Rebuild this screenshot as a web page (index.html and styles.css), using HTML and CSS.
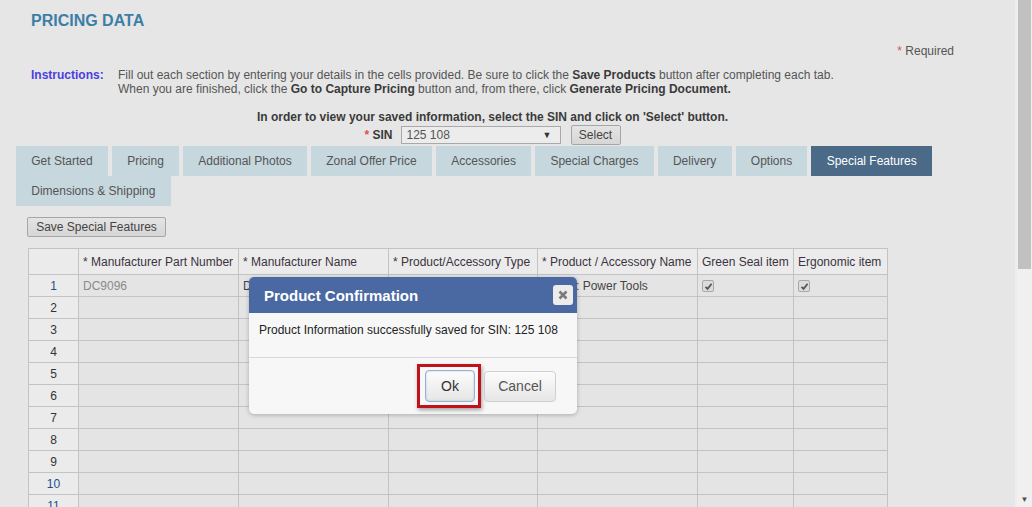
FILE: index.html
```html
<!DOCTYPE html>
<html>
<head>
<meta charset="utf-8">
<link rel="stylesheet" href="styles.css">
</head>
<body>
<div class="screen">
  <div class="page">
    <h1 class="title">PRICING DATA</h1>
    <div class="required"><span class="star">*</span> Required</div>
    <div class="instructions">
      <div class="ins-label">Instructions:</div>
      <div class="ins-text">
        Fill out each section by entering your details in the cells provided. Be sure to click the <b>Save Products</b> button after completing each tab.<br>
        When you are finished, click the <b>Go to Capture Pricing</b> button and, from there, click <b>Generate Pricing Document.</b>
      </div>
    </div>
    <div class="center">
      <div class="view-note">In order to view your saved information, select the SIN and click on 'Select' button.</div>
      <div class="sin-row">
        <span class="sin-label"><span class="star">*</span> SIN</span>
        <div class="select"><span>125 108</span><span class="arrow">&#9660;</span></div>
        <button class="btn select-btn">Select</button>
      </div>
    </div>
    <div class="tabs">
      <div class="tab">Get Started</div>
      <div class="tab">Pricing</div>
      <div class="tab">Additional Photos</div>
      <div class="tab">Zonal Offer Price</div>
      <div class="tab">Accessories</div>
      <div class="tab">Special Charges</div>
      <div class="tab">Delivery</div>
      <div class="tab">Options</div>
      <div class="tab active">Special Features</div>
      <div class="tab">Dimensions &amp; Shipping</div>
    </div>
    <div class="toolbar">
      <button class="btn save-btn">Save Special Features</button>
    </div>
    <table class="grid">
      <colgroup>
        <col style="width:50px"><col style="width:160px"><col style="width:150px"><col style="width:149px"><col style="width:160px"><col style="width:96px"><col style="width:94px">
      </colgroup>
      <thead>
        <tr>
          <th></th>
          <th>* Manufacturer Part Number</th>
          <th>* Manufacturer Name</th>
          <th>* Product/Accessory Type</th>
          <th>* Product / Accessory Name</th>
          <th>Green Seal item</th>
          <th>Ergonomic item</th>
        </tr>
      </thead>
      <tbody>
        <tr>
          <td class="num blue">1</td>
          <td class="muted">DC9096</td>
          <td>DeWalt</td>
          <td></td>
          <td>Cases: Power Tools</td>
          <td><span class="check"><svg viewBox="0 0 9 9" width="9" height="9"><path d="M1.5 4.8 L3.6 6.8 L7.6 1.8" fill="none" stroke="#555" stroke-width="1.8"/></svg></span></td>
          <td><span class="check"><svg viewBox="0 0 9 9" width="9" height="9"><path d="M1.5 4.8 L3.6 6.8 L7.6 1.8" fill="none" stroke="#555" stroke-width="1.8"/></svg></span></td>
        </tr>
        <tr><td class="num">2</td><td></td><td></td><td></td><td></td><td></td><td></td></tr>
        <tr><td class="num">3</td><td></td><td></td><td></td><td></td><td></td><td></td></tr>
        <tr><td class="num">4</td><td></td><td></td><td></td><td></td><td></td><td></td></tr>
        <tr><td class="num">5</td><td></td><td></td><td></td><td></td><td></td><td></td></tr>
        <tr><td class="num">6</td><td></td><td></td><td></td><td></td><td></td><td></td></tr>
        <tr><td class="num">7</td><td></td><td></td><td></td><td></td><td></td><td></td></tr>
        <tr><td class="num">8</td><td></td><td></td><td></td><td></td><td></td><td></td></tr>
        <tr><td class="num">9</td><td></td><td></td><td></td><td></td><td></td><td></td></tr>
        <tr><td class="num blue">10</td><td></td><td></td><td></td><td></td><td></td><td></td></tr>
        <tr><td class="num blue">11</td><td></td><td></td><td></td><td></td><td></td><td></td></tr>
      </tbody>
    </table>

    <div class="modal">
      <div class="modal-head">
        <span class="modal-title">Product Confirmation</span>
        <span class="close"><svg viewBox="0 0 10 10" width="10" height="10"><path d="M1.5 1.5 L8.5 8.5 M8.5 1.5 L1.5 8.5" stroke="#7a7a7a" stroke-width="2.6"/></svg></span>
      </div>
      <div class="modal-body">Product Information successfully saved for SIN: 125 108</div>
      <div class="modal-foot">
        <div class="highlight"><button class="mbtn ok">Ok</button></div>
        <button class="mbtn cancel">Cancel</button>
      </div>
    </div>
  </div>
  <div class="scrollbar">
    <div class="thumb"></div>
    <div class="track"></div>
    <div class="down">&#9660;</div>
  </div>
</div>
</body>
</html>
```

FILE: styles.css
```css
* { box-sizing: border-box; }
html, body { margin: 0; padding: 0; }
body {
  font-family: "Liberation Sans", Arial, sans-serif;
  font-size: 12px;
  color: #444;
  background: #e6e6e6;
}
.screen {
  display: flex;
  width: 1032px;
  height: 507px;
  overflow: hidden;
}
.page {
  position: relative;
  width: 1015px;
  height: 507px;
  overflow: hidden;
  background: #e6e6e6;
}
.title {
  margin: 0;
  padding: 12px 0 0 31px;
  font-size: 16px;
  line-height: 18px;
  font-weight: bold;
  color: #3d7ea6;
}
.required {
  margin-top: 14px;
  text-align: right;
  padding-right: 61px;
  line-height: 14px;
  color: #555;
}
.star { color: #d9534f; }
.instructions {
  display: flex;
  margin-top: 10px;
  line-height: 14px;
}
.ins-label {
  width: 118px;
  padding-left: 31px;
  font-weight: bold;
  color: #4b3fe0;
  flex-shrink: 0;
}
.ins-text { color: #555; }
.ins-text b { color: #3a3a3a; }
.center {
  margin-left: 16px;
  width: 953px;
  text-align: center;
}
.view-note {
  margin-top: 14px;
  line-height: 14px;
  font-weight: bold;
  color: #3a3a3a;
}
.sin-row {
  margin-top: 1px;
  display: flex;
  justify-content: center;
  align-items: center;
  height: 20px;
}
.sin-label {
  font-weight: bold;
  color: #3a3a3a;
  margin-right: 8px;
}
.select {
  width: 160px;
  height: 18px;
  border: 1px solid #a9a9a9;
  background: #ececec;
  display: flex;
  justify-content: space-between;
  align-items: center;
  padding: 0 8px 0 5px;
  color: #555;
  margin-right: 10px;
}
.select .arrow { font-size: 9px; color: #333; }
.btn {
  font-family: "Liberation Sans", Arial, sans-serif;
  font-size: 12px;
  color: #444;
  background: linear-gradient(#e4e4e4, #d6d6d6);
  border: 1px solid #a6a6a6;
  border-radius: 2px;
  padding: 0;
}
.select-btn { width: 50px; height: 20px; }
.tabs {
  margin: 1px 0 0 16px;
  width: 980px;
  display: flex;
  flex-wrap: wrap;
  column-gap: 4px;
}
.tab {
  height: 30px;
  line-height: 30px;
  padding: 0 15.25px;
  background: #c6d7de;
  color: #555;
}
.tab.active {
  background: #4a6a88;
  color: #fff;
}
.toolbar { margin: 11px 0 0 27px; }
.save-btn { width: 139px; height: 20px; }
.grid {
  margin: 11px 0 0 28px;
  border-collapse: collapse;
  table-layout: fixed;
  width: 859px;
}
.grid th, .grid td {
  border: 1px solid #c3c3c3;
  padding: 0 4px;
  white-space: nowrap;
  overflow: hidden;
  text-align: left;
}
.grid th {
  height: 26px;
  font-weight: normal;
  color: #3b3340;
  background: #ebebeb;
}
.grid td {
  height: 22px;
  background: #e4e4e4;
  color: #444;
}
.grid td.num {
  text-align: center;
  background: #ebebeb;
  color: #333;
}
.grid td.num.blue { color: #1f4e8c; }
.grid td.muted { color: #8a8a8a; }
.check {
  display: inline-flex;
  align-items: center;
  justify-content: center;
  width: 12px;
  height: 12px;
  border: 1px solid #a8a8a8;
  border-radius: 2px;
  background: #dcdcdc;
  vertical-align: middle;
}
.modal {
  position: absolute;
  left: 249px;
  top: 277px;
  width: 328px;
  height: 137px;
  background: #f7f7f7;
  border-radius: 5px;
  box-shadow: 0 1px 4px rgba(0,0,0,0.25);
  display: flex;
  flex-direction: column;
}
.modal-head {
  height: 36px;
  background: #4a69a2;
  border-radius: 5px 5px 0 0;
  display: flex;
  align-items: center;
  justify-content: space-between;
  padding: 0 4px 0 15px;
}
.modal-title {
  color: #fff;
  font-weight: bold;
  font-size: 15px;
}
.close {
  width: 20px;
  height: 20px;
  border-radius: 3px;
  background: #ececec;
  display: flex;
  align-items: center;
  justify-content: center;
}
.modal-body {
  height: 45px;
  padding: 10px 0 0 10px;
  color: #222;
  border-bottom: 1px solid #d8d8d8;
}
.modal-foot {
  flex: 1;
  display: flex;
  justify-content: flex-end;
  align-items: center;
  padding-right: 21px;
  column-gap: 3px;
}
.highlight {
  border: 3px solid #c1121c;
  padding: 3px 3px 3px 5px;
  box-shadow: 1px 2px 4px rgba(0,0,0,0.35);
}
.mbtn {
  font-family: "Liberation Sans", Arial, sans-serif;
  font-size: 14px;
  color: #333;
  height: 32px;
  border-radius: 4px;
  background: linear-gradient(#fcfcfc, #e6e6e6);
  border: 1px solid #cfcfcf;
  padding: 0;
}
.ok {
  width: 50px;
  border-color: #98b0d4;
  box-shadow: inset 0 0 2px rgba(120,150,200,0.5);
}
.cancel { width: 72px; height: 31px; color: #555; }
.scrollbar {
  width: 17px;
  height: 507px;
  background: #f0f0f0;
  border-left: 2px solid #ededed;
  display: flex;
  flex-direction: column;
  align-items: center;
}
.thumb {
  width: 13px;
  height: 269px;
  background: #c1c1c1;
}
.track { flex: 1; }
.down {
  font-size: 8px;
  color: #505050;
  height: 14px;
  line-height: 14px;
}
```
